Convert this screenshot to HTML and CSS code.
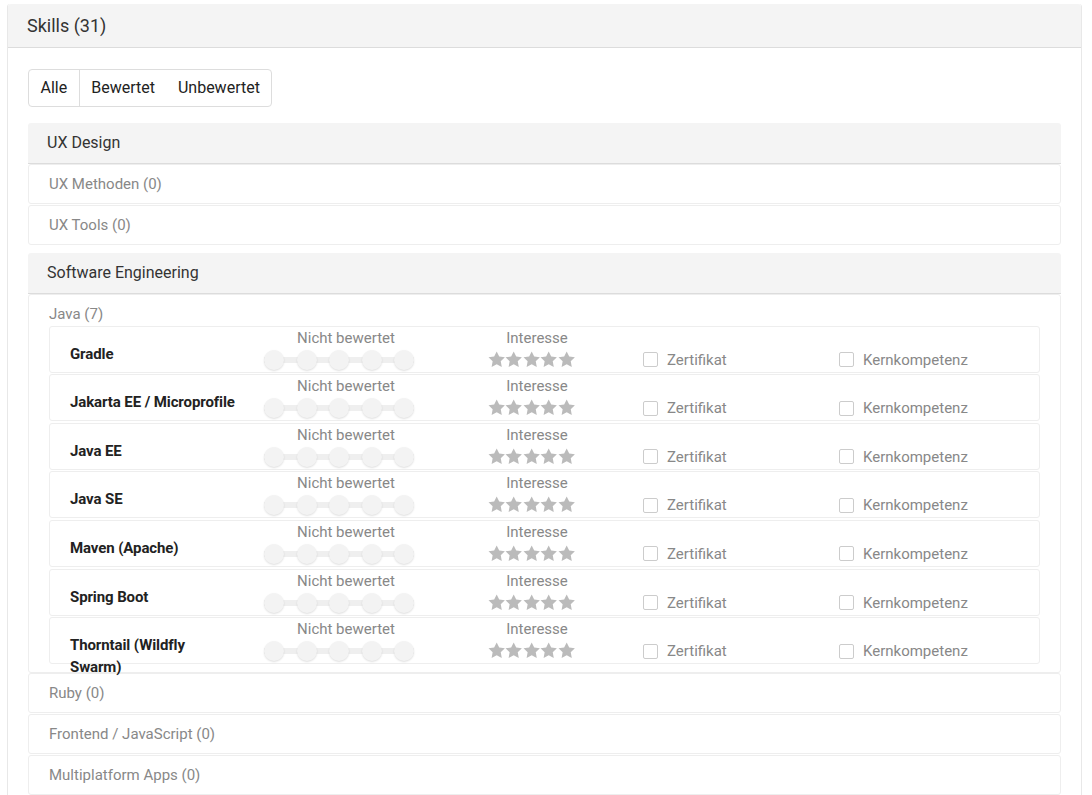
FILE: index.html
```html
<!DOCTYPE html>
<html lang="de">
<head>
  <meta charset="UTF-8" />
  <title>Skills</title>
  <link rel="stylesheet" href="styles.css">
</head>
<body>

<svg width="0" height="0" style="position:absolute">
  <symbol id="star" viewBox="1.3 1.3 21.4 21.4">
    <path d="M12 1.8l3.2 6.5 7.1 1-5.2 5 1.3 7.1L12 18l-6.4 3.4 1.3-7.1-5.2-5 7.1-1z"/>
  </symbol>
</svg>

<div class="card">
  <div class="card-head">Skills (31)</div>
  <div class="card-body">

    <div class="filter">
      <button class="active">Alle</button>
      <button>Bewertet</button>
      <button>Unbewertet</button>
    </div>

    <!-- UX -->
    <div class="group">
      <div class="group-head">UX Design</div>
      <div class="item">UX Methoden (0)</div>
      <div class="item">UX Tools (0)</div>
    </div>

    <!-- Software Engineering -->
    <div class="group">
      <div class="group-head">Software Engineering</div>

      <div class="item open">
        <div class="item-title">Java (7)</div>

        <div class="skill">
          <div class="skill-name">Gradle</div>
          <div class="rating"><div class="label">Nicht bewertet</div><div class="slider"><span></span><span></span><span></span><span></span><span></span></div></div>
          <div class="interest"><div class="label">Interesse</div><div class="stars"><svg><use href="#star"/></svg><svg><use href="#star"/></svg><svg><use href="#star"/></svg><svg><use href="#star"/></svg><svg><use href="#star"/></svg></div></div>
          <label class="check"><span class="box"></span>Zertifikat</label>
          <label class="check"><span class="box"></span>Kernkompetenz</label>
        </div>

        <div class="skill">
          <div class="skill-name">Jakarta EE / Microprofile</div>
          <div class="rating"><div class="label">Nicht bewertet</div><div class="slider"><span></span><span></span><span></span><span></span><span></span></div></div>
          <div class="interest"><div class="label">Interesse</div><div class="stars"><svg><use href="#star"/></svg><svg><use href="#star"/></svg><svg><use href="#star"/></svg><svg><use href="#star"/></svg><svg><use href="#star"/></svg></div></div>
          <label class="check"><span class="box"></span>Zertifikat</label>
          <label class="check"><span class="box"></span>Kernkompetenz</label>
        </div>

        <div class="skill">
          <div class="skill-name">Java EE</div>
          <div class="rating"><div class="label">Nicht bewertet</div><div class="slider"><span></span><span></span><span></span><span></span><span></span></div></div>
          <div class="interest"><div class="label">Interesse</div><div class="stars"><svg><use href="#star"/></svg><svg><use href="#star"/></svg><svg><use href="#star"/></svg><svg><use href="#star"/></svg><svg><use href="#star"/></svg></div></div>
          <label class="check"><span class="box"></span>Zertifikat</label>
          <label class="check"><span class="box"></span>Kernkompetenz</label>
        </div>

        <div class="skill">
          <div class="skill-name">Java SE</div>
          <div class="rating"><div class="label">Nicht bewertet</div><div class="slider"><span></span><span></span><span></span><span></span><span></span></div></div>
          <div class="interest"><div class="label">Interesse</div><div class="stars"><svg><use href="#star"/></svg><svg><use href="#star"/></svg><svg><use href="#star"/></svg><svg><use href="#star"/></svg><svg><use href="#star"/></svg></div></div>
          <label class="check"><span class="box"></span>Zertifikat</label>
          <label class="check"><span class="box"></span>Kernkompetenz</label>
        </div>

        <div class="skill">
          <div class="skill-name">Maven (Apache)</div>
          <div class="rating"><div class="label">Nicht bewertet</div><div class="slider"><span></span><span></span><span></span><span></span><span></span></div></div>
          <div class="interest"><div class="label">Interesse</div><div class="stars"><svg><use href="#star"/></svg><svg><use href="#star"/></svg><svg><use href="#star"/></svg><svg><use href="#star"/></svg><svg><use href="#star"/></svg></div></div>
          <label class="check"><span class="box"></span>Zertifikat</label>
          <label class="check"><span class="box"></span>Kernkompetenz</label>
        </div>

        <div class="skill">
          <div class="skill-name">Spring Boot</div>
          <div class="rating"><div class="label">Nicht bewertet</div><div class="slider"><span></span><span></span><span></span><span></span><span></span></div></div>
          <div class="interest"><div class="label">Interesse</div><div class="stars"><svg><use href="#star"/></svg><svg><use href="#star"/></svg><svg><use href="#star"/></svg><svg><use href="#star"/></svg><svg><use href="#star"/></svg></div></div>
          <label class="check"><span class="box"></span>Zertifikat</label>
          <label class="check"><span class="box"></span>Kernkompetenz</label>
        </div>

        <div class="skill">
          <div class="skill-name">Thorntail (Wildfly Swarm)</div>
          <div class="rating"><div class="label">Nicht bewertet</div><div class="slider"><span></span><span></span><span></span><span></span><span></span></div></div>
          <div class="interest"><div class="label">Interesse</div><div class="stars"><svg><use href="#star"/></svg><svg><use href="#star"/></svg><svg><use href="#star"/></svg><svg><use href="#star"/></svg><svg><use href="#star"/></svg></div></div>
          <label class="check"><span class="box"></span>Zertifikat</label>
          <label class="check"><span class="box"></span>Kernkompetenz</label>
        </div>
      </div>

      <div class="item">Ruby (0)</div>
      <div class="item">Frontend / JavaScript (0)</div>
      <div class="item">Multiplatform Apps (0)</div>
    </div>

  </div>
</div>

</body>
</html>
```

FILE: styles.css
```css
* { box-sizing: border-box; }
body {
  margin: 0;
  padding: 4px 10px 0 7px;
  font-family: Roboto, "Liberation Sans", sans-serif;
  color: #333;
  background: #fff;
}
.card {
  border: 1px solid #e8e8e8;
  border-top: none;
  border-radius: 3px 3px 0 0;
  min-height: 800px;
}
.card-head {
  background: #f4f4f4;
  border-bottom: 1px solid #dcdcdc;
  border-radius: 3px 3px 0 0;
  height: 44px;
  line-height: 44px;
  padding: 0 19px;
  font-size: 18px;
}
.card-body {
  padding: 21px 20px 0;
}
.filter {
  display: flex;
  width: fit-content;
  border: 1px solid #ddd;
  border-radius: 4px;
  margin-bottom: 16px;
}
.filter button {
  font-family: inherit;
  font-size: 16px;
  color: #222;
  background: none;
  border: none;
  padding: 0 11.5px 0 11.5px;
  line-height: 36px;
}
.filter button.active {
  border-right: 1px solid #ddd;
}
.group {
  margin-bottom: 8px;
}
.group-head {
  background: #f4f4f4;
  border-bottom: 1px solid #dcdcdc;
  border-radius: 3px 3px 0 0;
  height: 41px;
  line-height: 40px;
  padding: 0 19px;
  font-size: 16px;
  color: #333;
}
.item {
  border: 1px solid #eee;
  border-radius: 3px;
  padding: 0 20px;
  line-height: 38px;
  font-size: 15px;
  color: #888;
  margin-bottom: 0.6px;
}
.item.open {
  line-height: normal;
  padding-bottom: 6px;
}
.item-title {
  padding-top: 9px;
  line-height: 20px;
  margin-bottom: 2px;
}
.skill {
  display: grid;
  grid-template-columns: 180px 192px 190px 196px 1fr;
  align-items: start;
  height: 47px;
  margin-bottom: 1.6px;
  padding-left: 20px;
  border: 1px solid #eee;
  border-radius: 3px;
}
.skill-name {
  padding: 16px 13px 0 0;
  line-height: 22px;
  font-size: 15px;
  font-weight: 700;
  color: #222;
  letter-spacing: -0.1px;
}
.label {
  line-height: 18px;
  font-size: 15px;
  color: #888;
  text-align: center;
}
.rating, .interest {
  padding-top: 2px;
}
.slider {
  display: flex;
  justify-content: space-between;
  width: 150px;
  height: 20px;
  margin: 3px 0 0 14px;
  background: linear-gradient(#efefef, #efefef) center / 100% 6px no-repeat;
}
.slider span {
  width: 20px;
  height: 20px;
  border-radius: 50%;
  background: #f3f3f3;
  box-shadow: 0 1px 2px rgba(0, 0, 0, 0.13);
}
.stars {
  display: flex;
  margin: 4px 0 0 46px;
}
.stars svg {
  width: 17.4px;
  height: 17px;
  fill: #bbb;
}
.check {
  display: flex;
  align-items: center;
  gap: 9px;
  padding: 23px 0 0 11px;
  line-height: 20px;
  font-size: 15px;
  color: #888;
}
.box {
  width: 15px;
  height: 15px;
  border: 1px solid #ccc;
  border-radius: 2px;
  background: #fff;
}
```
